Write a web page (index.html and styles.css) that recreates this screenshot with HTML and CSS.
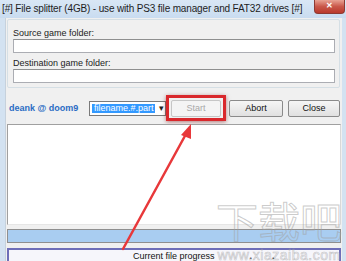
FILE: index.html
```html
<!DOCTYPE html>
<html lang="en">
<head>
    <meta charset="UTF-8">
    <title>File splitter (4GB)</title>
    <link rel="stylesheet" href="styles.css">
</head>
<body>
    <div class="window">
        <div class="titlebar">
            <span class="title">[#] File splitter (4GB) - use with PS3 file manager and FAT32 drives [#]</span>
            <span class="close">&#x2715;</span>
        </div>
        <div class="client">
            <div class="group">
                <label class="field-label">Source game folder:</label>
                <div class="field"></div>
                <label class="field-label">Destination game folder:</label>
                <div class="field"></div>
            </div>
            <div class="toolbar">
                <span class="author">deank @ doom9</span>
                <div class="combo">
                    <span class="combo-text">filename.#.part</span>
                    <span class="combo-arrow">&#9662;</span>
                </div>
                <div class="highlight">
                    <button class="btn btn-disabled">Start</button>
                </div>
                <button class="btn btn-abort">Abort</button>
                <button class="btn">Close</button>
            </div>
            <div class="log"></div>
            <div class="progress"></div>
            <div class="status">
                <span class="status-text">Current file progress</span>
                <span class="dot">.</span>
                <span class="dot dot-last">.</span>
            </div>
        </div>

        <svg class="arrow" width="346" height="261" viewBox="0 0 346 261">
            <line x1="123" y1="249" x2="186" y2="134" stroke="#e8383a" stroke-width="2.5" stroke-linecap="round"/>
            <polygon points="191,124 181,135 191,139" fill="#e8383a"/>
        </svg>

        <div class="watermark">
            <span class="wm-big">下载吧</span>
            <span class="wm-url">www.xiazaiba.com</span>
        </div>
    </div>
</body>
</html>
```

FILE: styles.css
```css
body {
    margin: 0;
    padding: 0;
    font-family: 'Liberation Sans', Arial, sans-serif;
    background: #fff;
}
.window {
    position: relative;
    width: 346px;
    height: 261px;
    overflow: hidden;
    background: #d3e2f1;
    display: flex;
    flex-direction: column;
}
.titlebar {
    height: 18px;
    flex-shrink: 0;
    display: flex;
    align-items: flex-start;
    justify-content: space-between;
    background: linear-gradient(#d9e7f5, #c9dcf0);
}
.title {
    font-size: 10px;
    letter-spacing: -0.15px;
    color: #1e1e1e;
    padding: 3px 0 0 2px;
    white-space: nowrap;
}
.close {
    width: 29px;
    height: 13px;
    margin-right: 1px;
    background: linear-gradient(#e8a293, #c9584a 50%, #b9392c);
    border: 1px solid #8d3a33;
    border-top: none;
    border-radius: 0 0 4px 4px;
    color: #fff;
    font-size: 8px;
    font-weight: bold;
    text-align: center;
    line-height: 12px;
}
.client {
    flex: 1;
    margin: 0 4px 0 5px;
    background: #f0f0f0;
    border-left: 1px solid #c6d1dc;
    display: flex;
    flex-direction: column;
}
.group {
    margin: 1px 2px 0 1px;
    border: 1px solid #d5dfe5;
    border-radius: 2px;
    padding: 8px 4px 4px 5px;
    display: flex;
    flex-direction: column;
}
.field-label {
    font-size: 9px;
    color: #222;
    height: 11px;
    line-height: 11px;
}
.field {
    height: 12px;
    background: #fff;
    border: 1px solid #abadb3;
    border-top-color: #8e8f8f;
    margin-bottom: 5px;
}
.field:last-child {
    margin-bottom: 0;
}
.toolbar {
    display: flex;
    align-items: center;
    height: 18px;
    flex-shrink: 0;
    margin-top: 11px;
}
.author {
    font-size: 9px;
    font-weight: bold;
    color: #2b6cc4;
    width: 80px;
    padding-left: 3px;
}
.combo {
    width: 77px;
    height: 15px;
    display: flex;
    align-items: center;
    background: #fff;
    border: 1px solid #7a7a7a;
    box-sizing: border-box;
}
.combo-text {
    flex: 1;
    margin: 2px;
    height: 9px;
    line-height: 9px;
    font-size: 9px;
    color: #fff;
    background: #3399ff;
    padding-left: 2px;
    white-space: nowrap;
}
.combo-arrow {
    width: 8px;
    font-size: 9px;
    color: #222;
    text-align: center;
}
.highlight {
    width: 54px;
    height: 20px;
    flex-shrink: 0;
    border: 3px solid #d9282c;
    display: flex;
    align-items: center;
    justify-content: center;
    box-shadow: 0 1px 4px rgba(120, 0, 0, 0.5);
}
.btn {
    width: 52px;
    height: 17px;
    padding: 0;
    flex-shrink: 0;
    font-family: 'Liberation Sans', Arial, sans-serif;
    font-size: 9px;
    color: #111;
    background: linear-gradient(#f6f6f6, #e0e0e0);
    border: 1px solid #8a8a8a;
    border-radius: 2px;
    margin-left: 5px;
}
.btn-disabled {
    margin-left: 0;
    width: 50px;
    color: #a8a8a8;
    background: #f4f4f4;
    border-color: #c6c6c6;
}
.btn-abort {
    width: 54px;
    margin-left: 3px;
}
.log {
    height: 99px;
    flex-shrink: 0;
    margin: 7px 1px 0 1px;
    background: #fff;
    border: 1px solid #a0a0a0;
    border-right-color: #d8d8d8;
    border-bottom-color: #e6e6e6;
}
.progress {
    height: 12px;
    flex-shrink: 0;
    margin: 4px 1px 0 1px;
    background: #a9cdf1;
    border: 1px solid #8f8f8f;
}
.status {
    flex: 1;
    margin: 5px 1px 0 1px;
    border: 2px solid #6e6eb8;
    border-bottom: none;
    background: #f6f6fb;
    display: flex;
    align-items: center;
    font-size: 9px;
    line-height: 10px;
    color: #111;
}
.status-text {
    margin-left: 124px;
}
.dot {
    margin-left: 35px;
    font-weight: bold;
}
.dot-last {
    margin-left: 20px;
}
.arrow {
    position: absolute;
    left: 0;
    top: 0;
    pointer-events: none;
}
.watermark {
    position: absolute;
    left: 214px;
    top: 192px;
    width: 130px;
    display: flex;
    flex-direction: column;
    align-items: center;
    pointer-events: none;
}
.wm-big {
    font-family: 'Noto Sans CJK SC', sans-serif;
    font-size: 42px;
    line-height: 56px;
    color: transparent;
    -webkit-text-stroke: 1px rgba(160, 160, 160, 0.55);
}
.wm-url {
    font-size: 14px;
    line-height: 14px;
    color: transparent;
    -webkit-text-stroke: 0.6px rgba(160, 160, 160, 0.6);
    letter-spacing: 0.5px;
}
```
